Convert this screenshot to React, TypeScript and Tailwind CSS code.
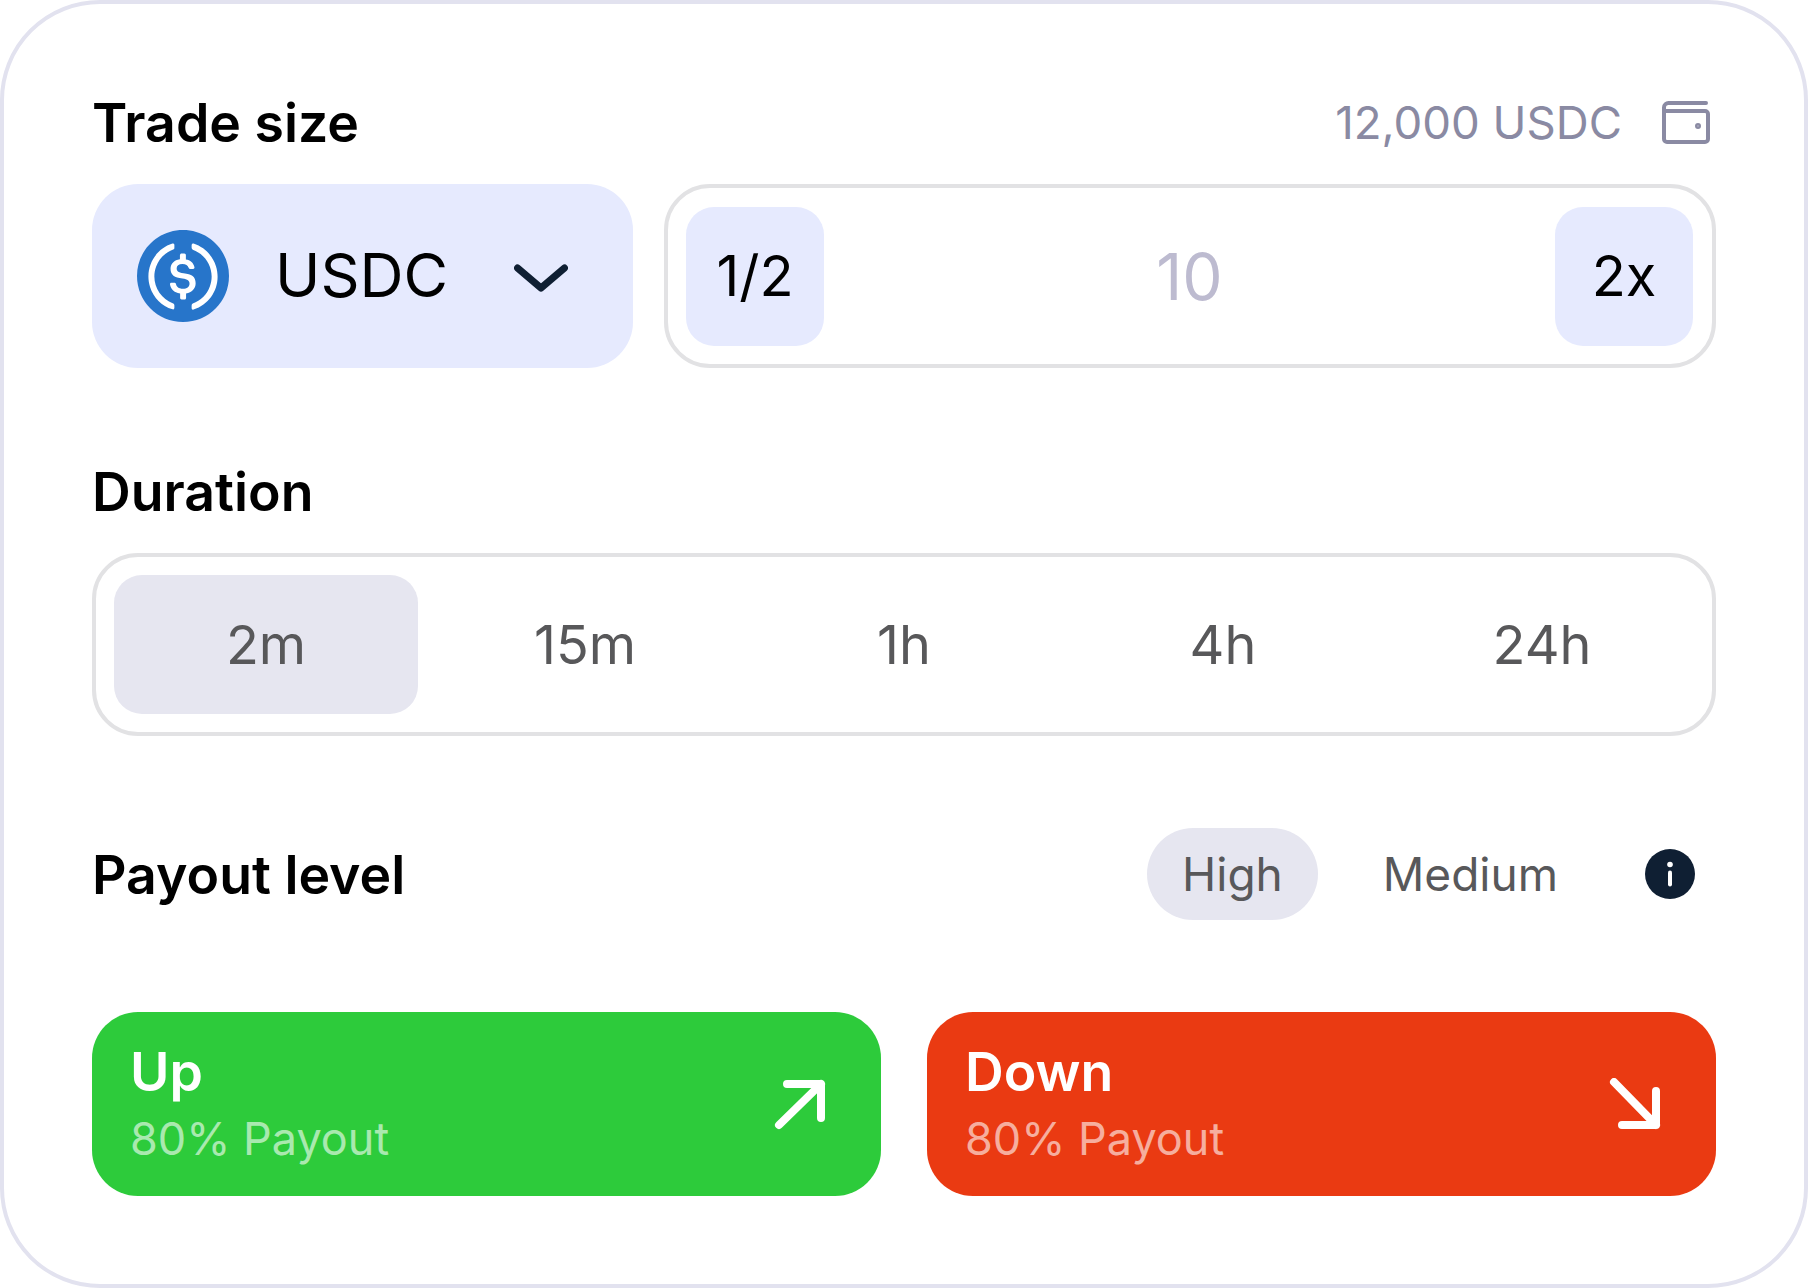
import React from 'react';

const durations = ['2m', '15m', '1h', '4h', '24h'];

const UsdcIcon = () => (
  <svg viewBox="0 0 2000 2000" className="w-[92px] h-[92px] shrink-0">
    <path d="M1000 2000c554.17 0 1000-445.83 1000-1000S1554.17 0 1000 0 0 445.83 0 1000s445.83 1000 1000 1000z" fill="#2775ca" />
    <path d="M1275 1158.33c0-145.83-87.5-195.83-262.5-216.66-125-16.67-150-50-150-108.34s41.67-95.83 125-95.83c75 0 116.67 25 137.5 87.5 4.17 12.5 16.67 20.83 29.17 20.83h66.66c16.67 0 29.17-12.5 29.17-29.16v-4.17c-16.67-91.67-91.67-162.5-187.5-170.83v-100c0-16.67-12.5-29.17-33.33-33.34h-62.5c-16.67 0-29.17 12.5-33.34 33.34v95.83c-125 16.67-204.16 100-204.16 204.17 0 137.5 83.33 191.66 258.33 212.5 116.67 20.83 154.17 45.83 154.17 112.5s-58.34 112.5-137.5 112.5c-108.34 0-145.84-45.84-158.34-108.34-4.16-16.66-16.66-25-29.16-25h-70.84c-16.66 0-29.16 12.5-29.16 29.17v4.17c16.66 104.16 83.33 179.16 220.83 200v100c0 16.66 12.5 29.16 33.33 33.33h62.5c16.67 0 29.17-12.5 33.34-33.33v-100c125-20.84 208.33-108.34 208.33-220.84z" fill="#fff" />
    <path d="M787.5 1595.83c-325-116.66-491.67-479.16-370.83-800 62.5-175 200-308.33 370.83-370.83 16.67-8.33 25-20.83 25-41.67V325c0-16.67-8.33-29.17-25-33.33-4.17 0-12.5 0-16.67 4.16-395.83 125-612.5 545.84-487.5 941.67 75 233.33 254.17 412.5 487.5 487.5 16.67 8.33 33.34 0 37.5-16.67 4.17-4.16 4.17-8.33 4.17-16.66v-58.34c0-12.5-12.5-29.16-25-37.5zM1229.17 295.83c-16.67-8.33-33.34 0-37.5 16.67-4.17 4.17-4.17 8.33-4.17 16.67v58.33c0 16.67 12.5 33.33 25 41.67 325 116.66 491.67 479.16 370.83 800-62.5 175-200 308.33-370.83 370.83-16.67 8.33-25 20.83-25 41.67V1700c0 16.67 8.33 29.17 25 33.33 4.17 0 12.5 0 16.67-4.16 395.83-125 612.5-545.84 487.5-941.67-75-237.5-258.34-416.67-487.5-491.67z" fill="#fff" />
  </svg>
);

const WalletIcon = () => (
  <svg viewBox="0 0 48 44" fill="none" stroke="#8a8aa3" strokeWidth="4" strokeLinecap="round" strokeLinejoin="round" className="w-[48px] h-[44px] shrink-0">
    <path d="M44 3H7a4.5 4.5 0 0 0-5 4.5V39a3 3 0 0 0 3 3h38a3 3 0 0 0 3-3V14a3 3 0 0 0-3-3H2" />
    <circle cx="36" cy="26" r="1" fill="#8a8aa3" />
  </svg>
);

const Chevron = () => (
  <svg viewBox="0 0 54 28" fill="none" stroke="#0f1f33" strokeWidth="7" strokeLinecap="round" strokeLinejoin="round" className="w-[54px] h-[28px] shrink-0 mt-1">
    <path d="M3.5 4 27 24 50.5 4" />
  </svg>
);

const ArrowUpRight = () => (
  <svg viewBox="0 0 52 52" fill="none" stroke="#fff" strokeWidth="8" strokeLinecap="round" strokeLinejoin="round" className="w-[52px] h-[52px] shrink-0">
    <path d="M5 47 47 6M13 6h34v34" />
  </svg>
);

const ArrowDownRight = () => (
  <svg viewBox="0 0 52 52" fill="none" stroke="#fff" strokeWidth="8" strokeLinecap="round" strokeLinejoin="round" className="w-[52px] h-[52px] shrink-0">
    <path d="M5 4l42 43M13 47h34V13" />
  </svg>
);

const InfoIcon = () => (
  <svg viewBox="0 0 50 50" className="w-[50px] h-[50px] shrink-0">
    <circle cx="25" cy="25" r="25" fill="#0f1f33" />
    <circle cx="25" cy="15.5" r="2.8" fill="#fff" />
    <rect x="23" y="21.5" width="4" height="16" rx="2" fill="#fff" />
  </svg>
);

const Heading: React.FC<{ children: React.ReactNode }> = ({ children }) => (
  <h2 className="pt-[1px] text-[53.6px] leading-[60px] font-semibold text-black">{children}</h2>
);

export default function App() {
  return (
    <div className="w-[1808px] h-[1288px] bg-white font-['Inter',sans-serif]">
      <div className="w-full h-full border-4 border-[#e2e2ef] rounded-[100px] p-[88px] flex flex-col gap-[92px]">
        <section>
          <div className="h-[60px] mb-8 flex items-center justify-between pr-[6px]">
            <Heading>Trade size</Heading>
            <div className="flex items-center gap-[40px]">
              <span className="pt-[1px] text-[45.6px] leading-[60px] text-[#8a8aa3]">12,000 USDC</span>
              <WalletIcon />
            </div>
          </div>
          <div className="flex gap-[31px]">
            <button className="w-[541px] h-[184px] shrink-0 rounded-[46px] bg-[#e6eafe] pl-[45px] flex items-center">
              <UsdcIcon />
              <span className="ml-[46px] mr-[66px] text-[61px] text-black">USDC</span>
              <Chevron />
            </button>
            <div className="flex-1 h-[184px] rounded-[46px] border-4 border-[#e2e2e4] py-[18px] pl-[18px] pr-[19px] flex items-center justify-between">
              <button className="w-[138px] h-[139px] rounded-[28px] bg-[#e6eafe] text-[56px] text-black">1/2</button>
              <span className="pt-[2px] text-[64px] text-[#bdbbd0]">10</span>
              <button className="w-[138px] h-[139px] rounded-[28px] bg-[#e6eafe] text-[56px] text-black">2x</button>
            </div>
          </div>
        </section>

        <section>
          <div className="h-[62px] mb-[31px] flex items-center">
            <Heading>Duration</Heading>
          </div>
          <div className="h-[183px] rounded-[46px] border-4 border-[#e2e2e4] p-[18px] grid grid-cols-5 gap-[15px]">
            {durations.map((d, i) => (
              <button key={d} className={`rounded-[28px] text-[54px] text-[#58585a] ${i === 0 ? 'bg-[#e6e6f0]' : ''}`}>
                {d}
              </button>
            ))}
          </div>
        </section>

        <section className="h-[92px] flex items-center justify-between pr-[21px]">
          <Heading>Payout level</Heading>
          <div className="flex items-center">
            <button className="h-[92px] px-[35px] rounded-full bg-[#e6e6f0] text-[46px] text-[#58585a]">High</button>
            <button className="h-[92px] px-[35px] ml-[30px] text-[46px] text-[#58585a]">Medium</button>
            <div className="ml-[52px]">
              <InfoIcon />
            </div>
          </div>
        </section>

        <section className="flex gap-[46px]">
          <button className="flex-1 h-[184px] rounded-[46px] bg-[#2dcb3b] pl-[38px] pr-[55px] flex items-center justify-between text-left">
            <div className="pt-[3px]">
              <div className="text-[53.6px] leading-[60px] font-semibold text-white">Up</div>
              <div className="mt-[7px] text-[45px] leading-[60px] text-white/60">80% Payout</div>
            </div>
            <ArrowUpRight />
          </button>
          <button className="flex-1 h-[184px] rounded-[46px] bg-[#ea3a12] pl-[38px] pr-[55px] flex items-center justify-between text-left">
            <div className="pt-[3px]">
              <div className="text-[53.6px] leading-[60px] font-semibold text-white">Down</div>
              <div className="mt-[7px] text-[45px] leading-[60px] text-white/60">80% Payout</div>
            </div>
            <ArrowDownRight />
          </button>
        </section>
      </div>
    </div>
  );
}
